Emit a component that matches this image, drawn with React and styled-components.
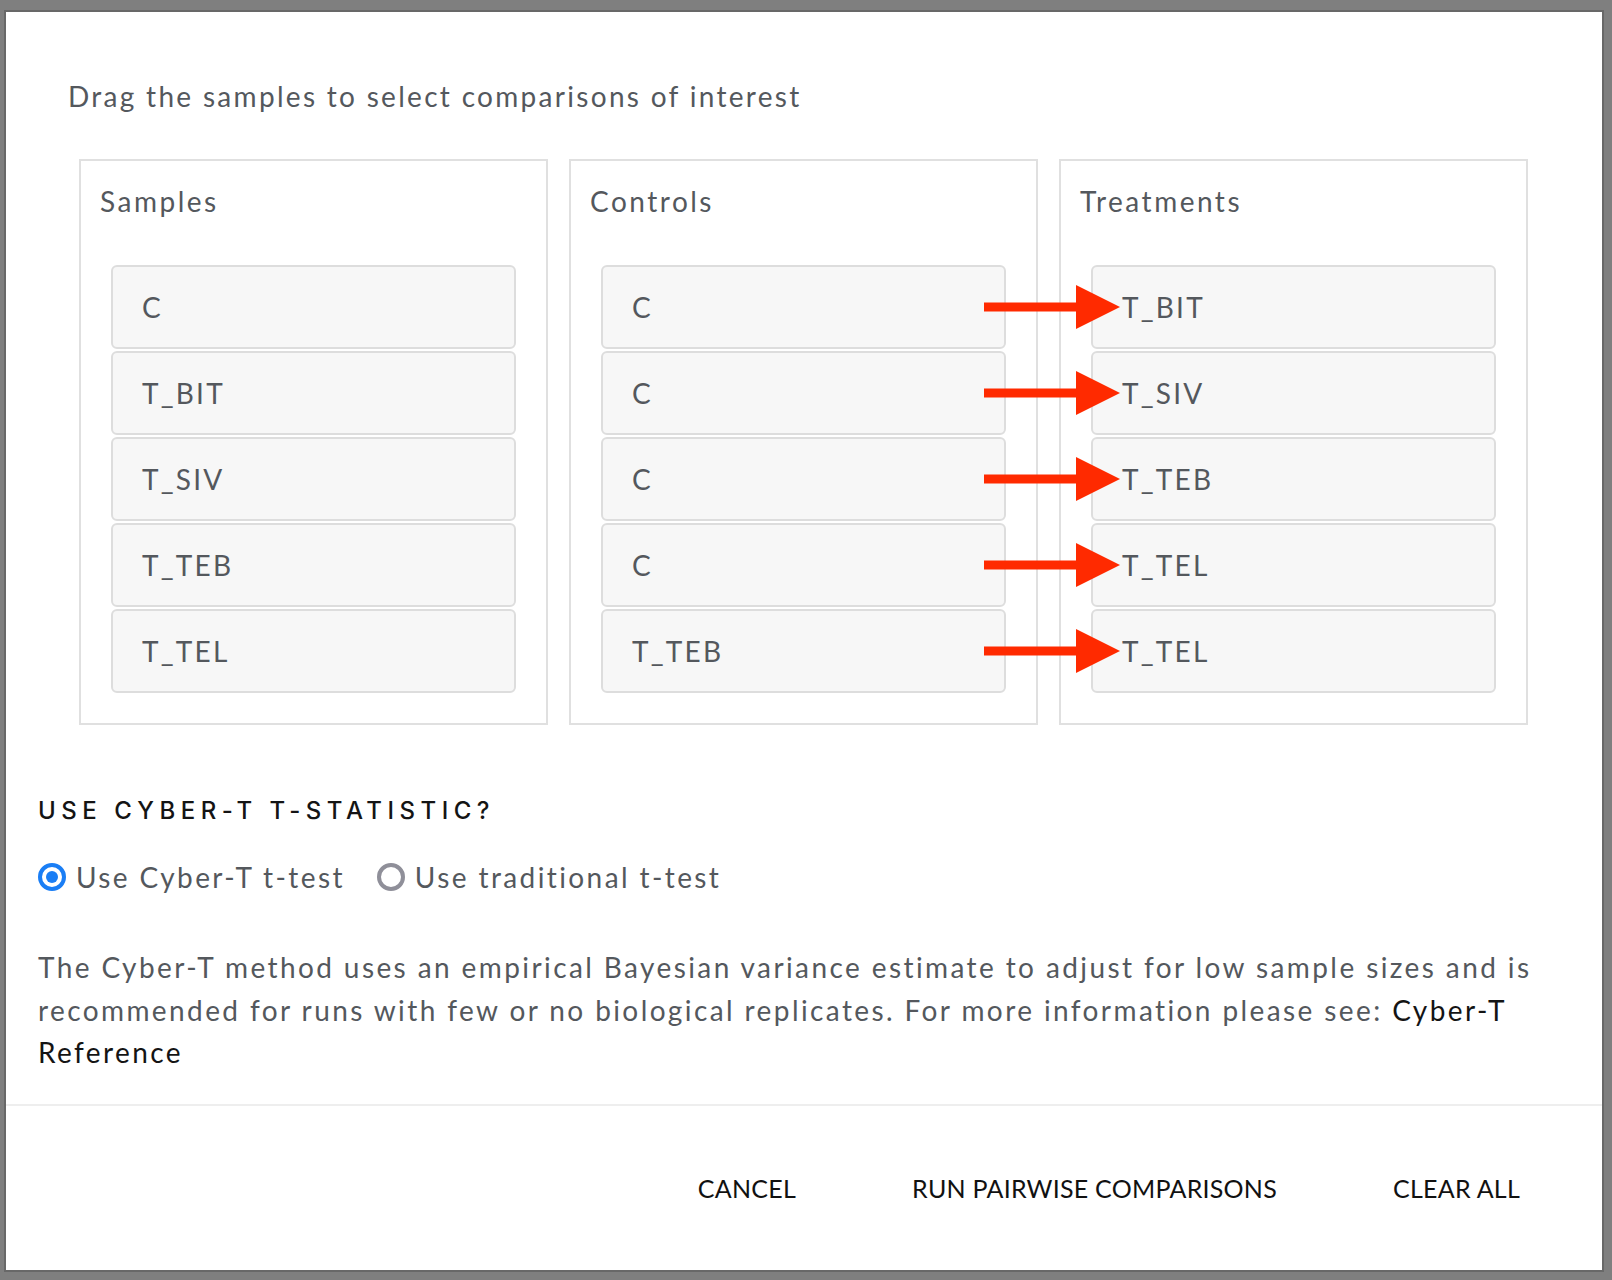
import styled, { createGlobalStyle } from 'styled-components';

const GlobalStyle = createGlobalStyle`
	html, body {
		margin: 0;
		padding: 0;
		background: #7f7f7f;
	}
	body {
		font-family: Lato, "Open Sans", sans-serif;
	}
	* {
		box-sizing: border-box;
	}
`;

const Overlay = styled.div`
	width: 1612px;
	height: 1280px;
	padding: 12px 10px 10px 6px;
`;

const Ventana = styled.div`
	width: 1596px;
	height: 1258px;
	background: #ffffff;
	box-shadow: 0 0 0 2px #686868;
	display: flex;
	flex-direction: column;
`;

const Cuerpo = styled.div`
	padding: 63px 32px 0 32px;
`;

const Instruccion = styled.p`
	margin: 0 0 42px 30px;
	font-size: 28px;
	line-height: 42px;
	letter-spacing: 2.3px;
	color: #54585d;
`;

const GrillaPaneles = styled.div`
	margin: 0 41px;
	display: grid;
	grid-template-columns: repeat(3, 469px);
	gap: 21px;
`;

const Panel = styled.div`
	border: 2px solid #e0e0e0;
	padding: 19px 30px 30px 30px;
`;

const TituloPanel = styled.h3`
	margin: 0 0 43px -11px;
	font-size: 28px;
	font-weight: 400;
	line-height: 42px;
	letter-spacing: 2.5px;
	color: #54585d;
`;

const Lista = styled.div`
	display: flex;
	flex-direction: column;
	gap: 2px;
`;

const Item = styled.div`
	position: relative;
	height: 84px;
	border: 2px solid #dddddd;
	border-radius: 6px;
	background: #f7f7f7;
	display: flex;
	align-items: center;
	padding-left: 29px;
	font-size: 28px;
	letter-spacing: 2.2px;
	color: #54585d;
`;

const Flecha = styled.svg`
	position: absolute;
	left: -109px;
	top: 50%;
	transform: translateY(-50%);
	z-index: 2;
`;

const Encabezado = styled.h4`
	margin: 68px 0 0 0;
	font-family: Inter, "Liberation Sans", sans-serif;
	font-size: 24px;
	font-weight: 500;
	line-height: 36px;
	letter-spacing: 5.5px;
	color: #141414;
`;

const FilaRadios = styled.div`
	margin-top: 27px;
	height: 42px;
	display: flex;
	align-items: center;
	gap: 32px;
`;

const OpcionRadio = styled.label`
	display: flex;
	align-items: center;
	gap: 10px;
	font-size: 28px;
	letter-spacing: 2.4px;
	color: #54585d;
`;

const Circulo = styled.span`
	width: 28px;
	height: 28px;
	border-radius: 50%;
	border: 4px solid ${(p) => (p.$activo ? '#1a7ef5' : '#8f8f99')};
	display: flex;
	align-items: center;
	justify-content: center;

	&::after {
		content: '';
		width: 12px;
		height: 12px;
		border-radius: 50%;
		background: ${(p) => (p.$activo ? '#1a7ef5' : 'transparent')};
	}
`;

const Texto = styled.p`
	margin: 48px 0 0 0;
	font-size: 28px;
	line-height: 42.5px;
	letter-spacing: 2.4px;
	color: #54585d;

	a {
		color: #141414;
		text-decoration: none;
	}
`;

const Pie = styled.div`
	margin-top: auto;
	height: 166px;
	border-top: 2px solid #eeeeee;
	display: flex;
	align-items: center;
	justify-content: flex-end;
	padding-right: 24px;
`;

const Boton = styled.button`
	background: none;
	border: none;
	padding: 12px 58px;
	font-family: Lato, "Open Sans", sans-serif;
	font-size: 25px;
	font-weight: 400;
	letter-spacing: 0.25px;
	color: #111111;
	text-transform: uppercase;
	cursor: pointer;
`;

const muestras = ['C', 'T_BIT', 'T_SIV', 'T_TEB', 'T_TEL'];
const controles = ['C', 'C', 'C', 'C', 'T_TEB'];
const tratamientos = ['T_BIT', 'T_SIV', 'T_TEB', 'T_TEL', 'T_TEL'];

const FlechaRoja = () => (
	<Flecha width="136" height="44" viewBox="0 0 136 44">
		<rect x="0" y="17.5" width="94" height="9" fill="#ff2a00" />
		<polygon points="92,0 136,22 92,44" fill="#ff2a00" />
	</Flecha>
);

const App = () => {
	return (
		<>
			<GlobalStyle />
			<Overlay>
				<Ventana>
					<Cuerpo>
						<Instruccion>Drag the samples to select comparisons of interest</Instruccion>
						<GrillaPaneles>
							<Panel>
								<TituloPanel>Samples</TituloPanel>
								<Lista>
									{muestras.map((m, i) => (
										<Item key={i}>{m}</Item>
									))}
								</Lista>
							</Panel>
							<Panel>
								<TituloPanel>Controls</TituloPanel>
								<Lista>
									{controles.map((c, i) => (
										<Item key={i}>{c}</Item>
									))}
								</Lista>
							</Panel>
							<Panel>
								<TituloPanel>Treatments</TituloPanel>
								<Lista>
									{tratamientos.map((t, i) => (
										<Item key={i}>
											<FlechaRoja />
											{t}
										</Item>
									))}
								</Lista>
							</Panel>
						</GrillaPaneles>

						<Encabezado>USE CYBER-T T-STATISTIC?</Encabezado>
						<FilaRadios>
							<OpcionRadio>
								<Circulo $activo />
								Use Cyber-T t-test
							</OpcionRadio>
							<OpcionRadio>
								<Circulo />
								Use traditional t-test
							</OpcionRadio>
						</FilaRadios>

						<Texto>
							The Cyber-T method uses an empirical Bayesian variance estimate to adjust for low
							sample sizes and is recommended for runs with few or no biological replicates. For
							more information please see: <a href="#">Cyber-T Reference</a>
						</Texto>
					</Cuerpo>
					<Pie>
						<Boton>Cancel</Boton>
						<Boton>Run pairwise comparisons</Boton>
						<Boton>Clear all</Boton>
					</Pie>
				</Ventana>
			</Overlay>
		</>
	);
};

export default App;
